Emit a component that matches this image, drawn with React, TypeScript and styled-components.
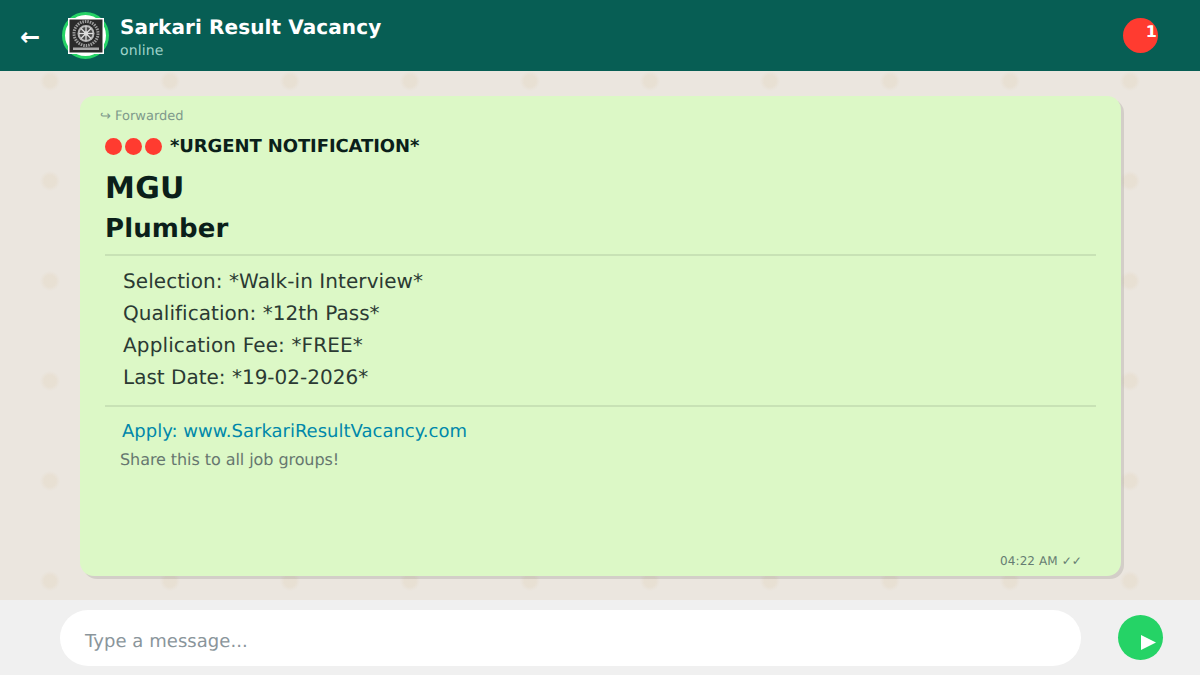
import React from "react";
import styled, { createGlobalStyle } from "styled-components";

const Global = createGlobalStyle`
  html, body { margin: 0; padding: 0; width: 1200px; height: 675px; overflow: hidden; }
  * { box-sizing: border-box; }
  body { font-family: "DejaVu Sans", sans-serif; text-rendering: geometricPrecision; }
`;

const Page = styled.div`
  width: 1200px;
  height: 675px;
  display: flex;
  flex-direction: column;
  background: #ebe6df;
`;

const Header = styled.header`
  height: 71px;
  flex: none;
  background: #075e54;
  display: flex;
  align-items: center;
  padding: 0 42px 0 20px;
`;

const Back = styled.span`
  font-size: 24px;
  font-weight: 700;
  line-height: 1;
  color: #fff;
  width: 42px;
  flex: none;
  margin-top: 3px;
`;

const AvatarRing = styled.div`
  width: 47px;
  height: 47px;
  flex: none;
  border-radius: 50%;
  border: 3px solid #25d366;
  background: #fff;
  display: flex;
  align-items: center;
  justify-content: center;
  margin-right: 11px;
  svg { display: block; flex: none; }
`;

const Titles = styled.div`
  flex: 1;
  display: flex;
  flex-direction: column;
  gap: 4px;
  padding-top: 4px;
`;

const Name = styled.div`
  font-size: 20px;
  font-weight: 700;
  line-height: 24px;
  letter-spacing: 0.1px;
  color: #fff;
`;

const Status = styled.div`
  font-size: 14px;
  line-height: 17px;
  letter-spacing: 0.15px;
  color: #9fd3cb;
`;

const Badge = styled.div`
  position: relative;
  width: 35px;
  height: 35px;
  border-radius: 50%;
  background: #ff3b30;
`;

const BadgeCount = styled.span`
  position: absolute;
  top: 4px;
  right: 1px;
  font-size: 16px;
  line-height: 20px;
  font-weight: 700;
  color: #fff;
`;

const Chat = styled.main`
  flex: 1;
  padding: 25px 79px 24px 80px;
  background-color: #ebe6df;
  background-image:
    radial-gradient(circle at 50px 10px, rgba(226, 212, 190, 0.35) 0, rgba(226, 212, 190, 0.35) 6px, transparent 10px);
  background-size: 120px 100px;
`;

const Bubble = styled.section`
  height: 480px;
  background: #dcf8c6;
  border-radius: 14px;
  box-shadow: 3px 3px 0 rgba(0, 0, 0, 0.1);
  padding: 12px 25px 0 25px;
  position: relative;
`;

const Forwarded = styled.div`
  font-size: 13px;
  line-height: 17px;
  color: #7f9a8c;
  margin-left: -5px;
`;

const Urgent = styled.div`
  display: flex;
  align-items: center;
  margin-top: 9px;
  font-size: 18px;
  font-weight: 700;
  line-height: 22px;
  letter-spacing: -0.1px;
  color: #0b1f1a;
`;

const Dot = styled.i`
  width: 17px;
  height: 17px;
  border-radius: 50%;
  background: #ff3b30;
  margin-right: 3px;
  flex: none;
`;

const UrgentText = styled.span`
  margin-left: 5px;
  padding-top: 2px;
`;

const Org = styled.h1`
  margin: 12px 0 0;
  font-size: 30px;
  line-height: 38px;
  font-weight: 700;
  letter-spacing: 0.3px;
  color: #0b1f1a;
`;

const Role = styled.h2`
  margin: 5px 0 0;
  font-size: 26px;
  line-height: 32px;
  font-weight: 700;
  letter-spacing: 0.1px;
  color: #0b1f1a;
`;

const Rule = styled.hr`
  margin: 0;
  border: 0;
  height: 2px;
  background: #c8e2b5;
  width: 991px;
`;

const TopRule = styled(Rule)`
  margin-top: 9px;
`;

const Details = styled.div`
  padding: 9px 0 12px 18px;
`;

const Detail = styled.div<{ $spacing: number }>`
  font-size: 20px;
  line-height: 32px;
  letter-spacing: ${(p) => p.$spacing}px;
  color: #2b3a33;
`;

const Apply = styled.div`
  font-size: 18px;
  line-height: 24px;
  color: #0088aa;
  margin: 13px 0 0 17px;
`;

const Share = styled.div`
  font-size: 16px;
  line-height: 20px;
  letter-spacing: -0.07px;
  color: #66776f;
  margin: 6px 0 0 15px;
`;

const Time = styled.div`
  position: absolute;
  right: 39px;
  bottom: 7px;
  font-size: 12px;
  line-height: 16px;
  letter-spacing: 0.1px;
  color: #667d72;
`;

const Composer = styled.footer`
  height: 75px;
  flex: none;
  background: #f0f0f0;
  display: flex;
  align-items: center;
  padding: 0 37px 0 60px;
`;

const Input = styled.div`
  width: 1021px;
  height: 56px;
  border-radius: 28px;
  background: #fff;
  display: flex;
  align-items: center;
  padding: 8px 25px 0;
  font-size: 18px;
  letter-spacing: 0.05px;
  color: #8a959b;
  margin-right: 37px;
`;

const Send = styled.div`
  position: relative;
  width: 45px;
  height: 45px;
  border-radius: 50%;
  background: #25d366;
  flex: none;
`;

const SendGlyph = styled.svg`
  position: absolute;
  left: 23px;
  top: 20px;
`;

const Logo = () => (
  <svg width="36" height="36" viewBox="0 0 36 36">
    <rect width="36" height="36" fill="#fff" />
    <rect x="1.5" y="1.5" width="33" height="33" fill="#2a2a2a" />
    <circle cx="18" cy="15.5" r="12" fill="none" stroke="#9c9c9c" strokeWidth="3" strokeDasharray="1.5 1" />
    <circle cx="18" cy="15.5" r="8.5" fill="#b8b8b8" />
    <circle cx="18" cy="15.5" r="6.5" fill="#4a4a4a" />
    <g stroke="#dedede" strokeWidth="1.3">
      <line x1="18" y1="8.5" x2="18" y2="22.5" />
      <line x1="11" y1="15.5" x2="25" y2="15.5" />
      <line x1="13" y1="10.5" x2="23" y2="20.5" />
      <line x1="23" y1="10.5" x2="13" y2="20.5" />
    </g>
    <circle cx="18" cy="15.5" r="2.2" fill="#ddd" />
    <rect x="5" y="29.5" width="26" height="2.5" fill="#a8a8a8" />
  </svg>
);

const details = [
  { text: "Selection: *Walk-in Interview*", spacing: 0.07 },
  { text: "Qualification: *12th Pass*", spacing: 0.04 },
  { text: "Application Fee: *FREE*", spacing: 0.13 },
  { text: "Last Date: *19-02-2026*", spacing: 0 },
];

export default function App() {
  return (
    <Page>
      <Global />
      <Header>
        <Back>←</Back>
        <AvatarRing><Logo /></AvatarRing>
        <Titles>
          <Name>Sarkari Result Vacancy</Name>
          <Status>online</Status>
        </Titles>
        <Badge><BadgeCount>1</BadgeCount></Badge>
      </Header>
      <Chat>
        <Bubble>
          <Forwarded>↪ Forwarded</Forwarded>
          <Urgent>
            <Dot /><Dot /><Dot />
            <UrgentText>*URGENT NOTIFICATION*</UrgentText>
          </Urgent>
          <Org>MGU</Org>
          <Role>Plumber</Role>
          <TopRule />
          <Details>
            {details.map((d) => (
              <Detail key={d.text} $spacing={d.spacing}>{d.text}</Detail>
            ))}
          </Details>
          <Rule />
          <Apply>Apply: www.SarkariResultVacancy.com</Apply>
          <Share>Share this to all job groups!</Share>
          <Time>04:22 AM ✓✓</Time>
        </Bubble>
      </Chat>
      <Composer>
        <Input>Type a message...</Input>
        <Send>
          <SendGlyph width="15" height="15" viewBox="0 0 15 15"><path d="M0 0 L15 7.5 L0 15 Z" fill="#fff" /></SendGlyph>
        </Send>
      </Composer>
    </Page>
  );
}
